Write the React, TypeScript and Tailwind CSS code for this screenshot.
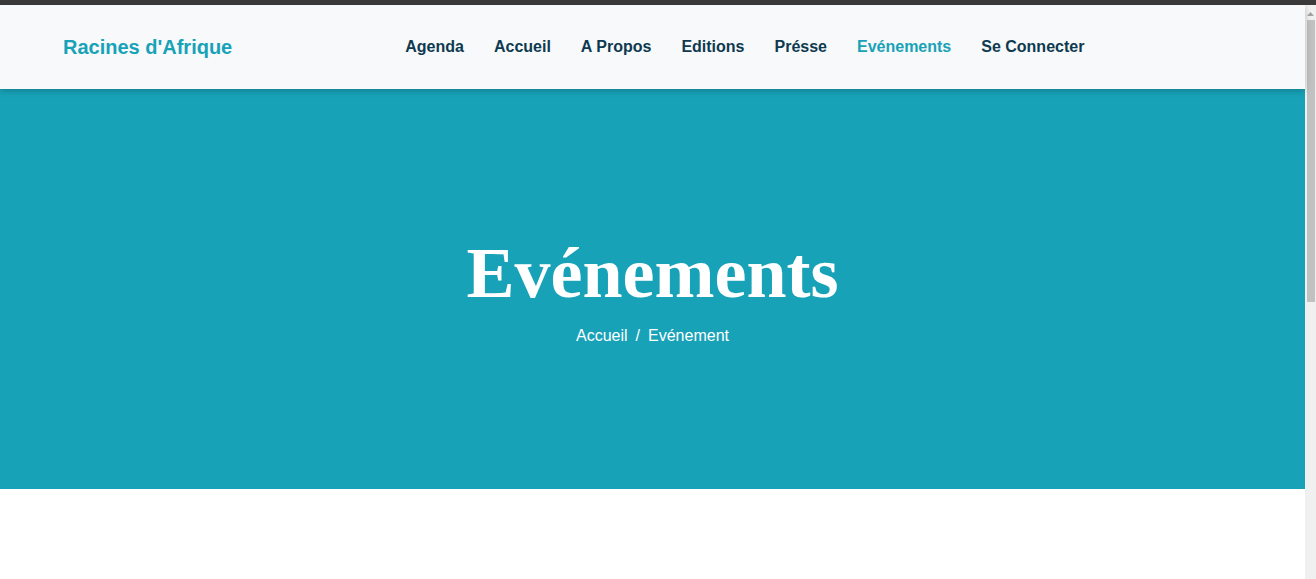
import React from "react";

const links = ["Agenda", "Accueil", "A Propos", "Editions", "Présse", "Evénements", "Se Connecter"];

export default function App() {
  return (
    <div className="flex h-[579px] flex-col overflow-hidden bg-white font-['Liberation_Sans',Arial,sans-serif]">
      <div className="h-[5px] shrink-0 bg-[#3b3b3b]" />
      <div className="flex min-h-0 flex-1">
        <div className="flex min-w-0 flex-1 flex-col">
          <header className="relative z-10 flex h-[84px] shrink-0 items-center bg-[#f8f9fa] pl-[63px] shadow-[0_2px_6px_rgba(0,0,0,0.22)]">
            <a className="text-[20px] font-bold leading-none text-[#17a2b8]">Racines d&apos;Afrique</a>
            <nav className="ml-[173px] flex items-center gap-[30px]">
              {links.map((l) => (
                <a
                  key={l}
                  className={
                    l === "Evénements"
                      ? "text-[16px] font-bold text-[#17a2b8]"
                      : "text-[16px] font-bold text-[#0e3a50]"
                  }
                >
                  {l}
                </a>
              ))}
            </nav>
          </header>

          <section className="flex h-[400px] shrink-0 flex-col items-center justify-center bg-[#18a2b8] text-white">
            <h1 className="mb-[8px] font-['Liberation_Serif',serif] text-[72px] font-bold leading-[86px]">
              Evénements
            </h1>
            <ol className="flex text-[16px] leading-6">
              <li>Accueil</li>
              <li className="pl-2 before:pr-2 before:content-['/']">Evénement</li>
            </ol>
          </section>

          <div className="flex-1 bg-white" />
        </div>

        {/* fake scrollbar */}
        <div className="flex w-[11px] shrink-0 flex-col bg-[#f0f0f0]">
          <div className="flex h-[15px] items-center justify-center pt-[2px]">
            <svg width="7" height="4" viewBox="0 0 7 4">
              <path d="M3.5 0 L7 4 L0 4 Z" fill="#a3a3a3" />
            </svg>
          </div>
          <div className="ml-[2px] mr-[1px] h-[282px] bg-[#c1c1c1]" />
        </div>
      </div>
    </div>
  );
}
